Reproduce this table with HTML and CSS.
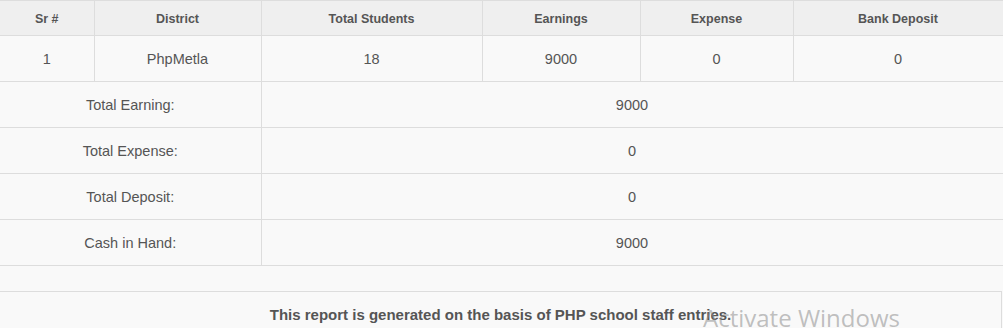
FILE: index.html
```html
<!DOCTYPE html>
<html>
<head>
<meta charset="utf-8">
<link rel="stylesheet" href="styles.css">
</head>
<body>
<div class="page">
  <table class="report">
    <colgroup>
      <col class="c1"><col class="c2"><col class="c3"><col class="c4"><col class="c5"><col class="c6">
    </colgroup>
    <thead>
      <tr>
        <th>Sr #</th>
        <th>District</th>
        <th>Total Students</th>
        <th>Earnings</th>
        <th>Expense</th>
        <th>Bank Deposit</th>
      </tr>
    </thead>
    <tbody>
      <tr>
        <td>1</td>
        <td>PhpMetla</td>
        <td>18</td>
        <td>9000</td>
        <td>0</td>
        <td>0</td>
      </tr>
      <tr>
        <td colspan="2">Total Earning:</td>
        <td colspan="4">9000</td>
      </tr>
      <tr>
        <td colspan="2">Total Expense:</td>
        <td colspan="4">0</td>
      </tr>
      <tr>
        <td colspan="2">Total Deposit:</td>
        <td colspan="4">0</td>
      </tr>
      <tr>
        <td colspan="2">Cash in Hand:</td>
        <td colspan="4">9000</td>
      </tr>
    </tbody>
  </table>
  <div class="gap"></div>
  <div class="footer">This report is generated on the basis of PHP school staff entries.</div>
</div>
<div class="watermark">Activate Windows</div>
</body>
</html>
```
FILE: styles.css
```css
html, body {
  margin: 0;
  padding: 0;
  background: #f9f9f9;
}
body {
  font-family: "Liberation Sans", Arial, sans-serif;
  color: #555;
  overflow: hidden;
  position: relative;
  width: 1003px;
  height: 328px;
}
.page {
  width: 1003px;
}
.report {
  width: 1003px;
  border-collapse: collapse;
  table-layout: fixed;
}
.c1 { width: 94px; }
.c2 { width: 167px; }
.c3 { width: 221px; }
.c4 { width: 158px; }
.c5 { width: 153px; }
.c6 { width: 210px; }
.report th,
.report td {
  border: 1px solid #dddddd;
  text-align: center;
  padding: 0;
}
.report tr > :first-child {
  border-left: none;
}
.report th {
  background: #efefef;
  font-weight: bold;
  font-size: 12.5px;
  height: 32px;
  padding-top: 2px;
}
.report td {
  background: #f9f9f9;
  font-size: 14.5px;
  height: 45px;
}
.gap {
  height: 25px;
}
.footer {
  border-top: 1px solid #dddddd;
  border-right: 1px solid #dddddd;
  width: 1002px;
  box-sizing: border-box;
  text-align: center;
  font-weight: bold;
  font-size: 15px;
  padding-top: 14px;
  height: 60px;
}
.watermark {
  position: absolute;
  left: 703px;
  top: 301px;
  font-family: "Open Sans", "Noto Sans", sans-serif;
  font-size: 24px;
  color: rgba(140, 140, 140, 0.55);
  white-space: nowrap;
  pointer-events: none;
}
```
